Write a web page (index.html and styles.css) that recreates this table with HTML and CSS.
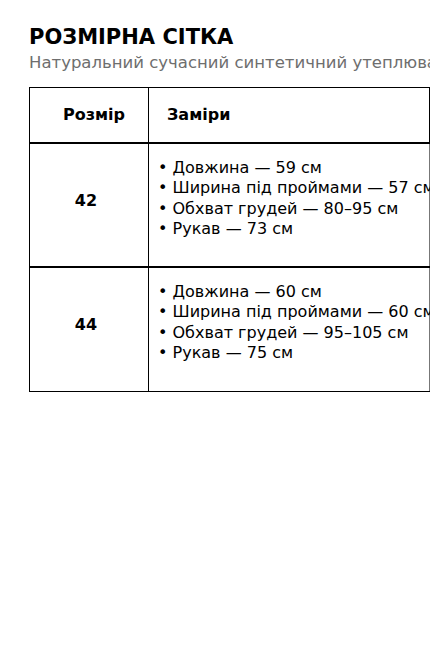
FILE: index.html
```html
<!DOCTYPE html>
<html lang="uk">
<head>
<meta charset="utf-8">
<link rel="stylesheet" href="styles.css">
</head>
<body>
<main class="page">
  <h1 class="title">РОЗМІРНА СІТКА</h1>
  <p class="subtitle">Натуральний сучасний синтетичний утеплювач</p>
  <table class="grid">
    <thead>
      <tr>
        <th class="col-size">Розмір</th>
        <th class="col-meas">Заміри</th>
      </tr>
    </thead>
    <tbody>
      <tr>
        <td class="size"><span class="size-num">42</span></td>
        <td class="meas">
          <ul class="list">
            <li>• Довжина — 59 см</li>
            <li>• Ширина під проймами — 57 см</li>
            <li>• Обхват грудей — 80–95 см</li>
            <li>• Рукав — 73 см</li>
          </ul>
        </td>
      </tr>
      <tr>
        <td class="size"><span class="size-num">44</span></td>
        <td class="meas">
          <ul class="list">
            <li>• Довжина — 60 см</li>
            <li>• Ширина під проймами — 60 см</li>
            <li>• Обхват грудей — 95–105 см</li>
            <li>• Рукав — 75 см</li>
          </ul>
        </td>
      </tr>
    </tbody>
  </table>
</main>
</body>
</html>
```

FILE: styles.css
```css
html, body {
  margin: 0;
  padding: 0;
  background: #fff;
  overflow: hidden;
}
body {
  font-family: "DejaVu Sans", sans-serif;
  color: #000;
}
.page {
  padding: 24px 0 0 29px;
  width: 401px;
}
.title {
  margin: 0;
  font-size: 21px;
  font-weight: bold;
  line-height: 26px;
  white-space: nowrap;
}
.subtitle {
  margin: 2px 0 0;
  font-size: 16.5px;
  line-height: 22px;
  color: #6e6e6e;
  white-space: nowrap;
}
.grid {
  margin-top: 13px;
  width: 401px;
  border-collapse: collapse;
  table-layout: fixed;
  border: 1px solid #000;
}
.grid th, .grid td {
  border: 1px solid #000;
  white-space: nowrap;
  overflow: visible;
}
.col-size { width: 108px; }
.grid th {
  height: 52px;
  font-size: 16px;
  font-weight: bold;
  padding: 0 0 2px;
}
.grid th.col-size { text-align: center; padding-left: 10px; }
.grid th.col-meas { text-align: left; padding-left: 18px; }
.grid thead th { border-bottom-width: 2px; }
.grid tbody tr { height: 124px; }
.grid tbody td { border-bottom-width: 2px; }
.grid tbody tr:last-child td { border-bottom-width: 1px; }
.grid td.meas { border-right-color: #777; }
.size {
  text-align: center;
  vertical-align: middle;
  padding: 0 6px 10px 0;
  font-size: 16px;
  font-weight: bold;
}
.meas {
  vertical-align: top;
  padding: 14px 0 0 9px;
}
.list {
  list-style: none;
  margin: 0;
  padding: 0;
  font-size: 16px;
  line-height: 20.3px;
}
```
